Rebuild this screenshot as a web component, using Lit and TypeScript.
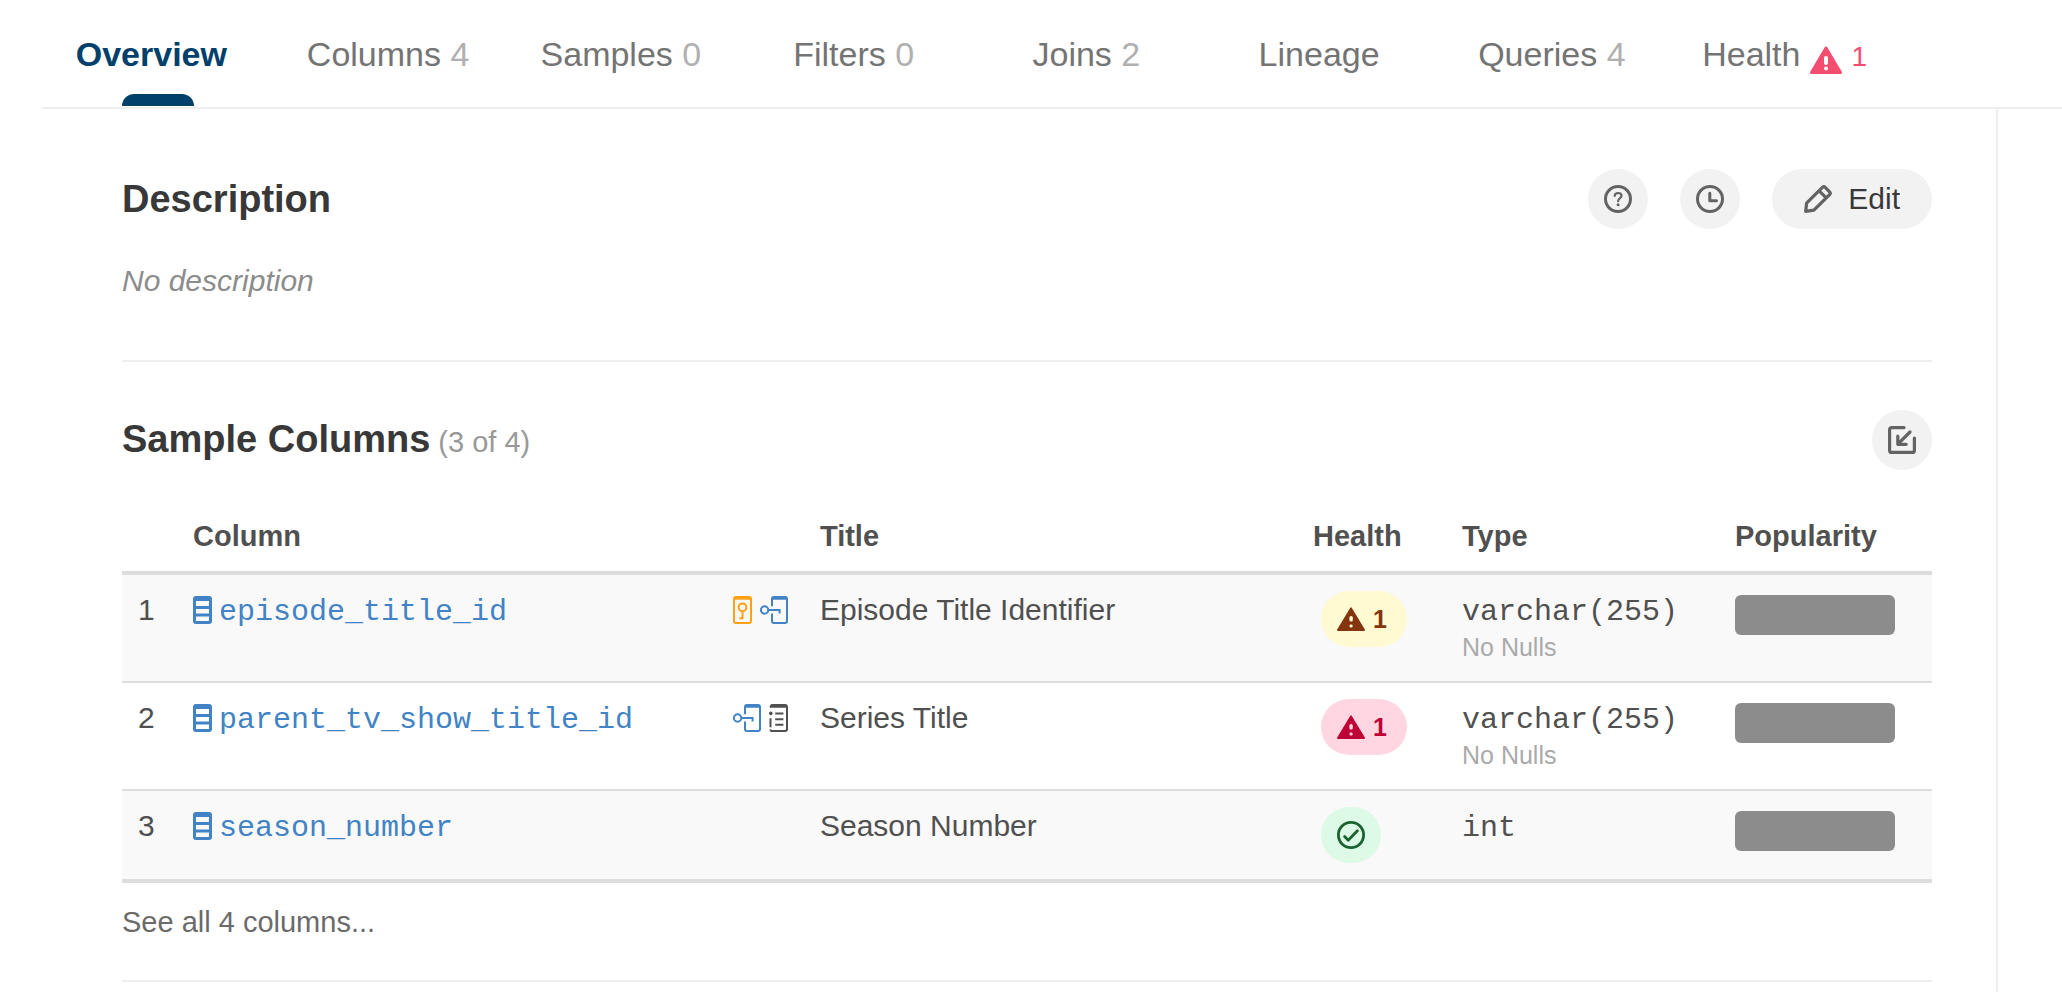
import { LitElement, html, css, svg, nothing } from "lit";
import { customElement, property, state } from "lit/decorators.js";
import { classMap } from "lit/directives/class-map.js";

interface Tab {
  label: string;
  count?: number;
  alert?: number;
}

interface Row {
  name: string;
  title: string;
  marks: string[];
  health: "warning" | "error" | "ok";
  issues?: number;
  type: string;
  note?: string;
}

const TABS: Tab[] = [
  { label: "Overview" },
  { label: "Columns", count: 4 },
  { label: "Samples", count: 0 },
  { label: "Filters", count: 0 },
  { label: "Joins", count: 2 },
  { label: "Lineage" },
  { label: "Queries", count: 4 },
  { label: "Health", alert: 1 },
];

const ROWS: Row[] = [
  {
    name: "episode_title_id",
    title: "Episode Title Identifier",
    marks: ["key", "join"],
    health: "warning",
    issues: 1,
    type: "varchar(255)",
    note: "No Nulls",
  },
  {
    name: "parent_tv_show_title_id",
    title: "Series Title",
    marks: ["join", "list"],
    health: "error",
    issues: 1,
    type: "varchar(255)",
    note: "No Nulls",
  },
  { name: "season_number", title: "Season Number", marks: [], health: "ok", type: "int" },
];

const ICONS: Record<string, { w: number; h: number; body: unknown }> = {
  help: {
    w: 28,
    h: 28,
    body: svg`<circle cx="14" cy="14" r="12.5" stroke-width="3"/>
      <path stroke-width="2.2" d="M10.7 10.8c.2-1.8 1.5-2.8 3.4-2.8 2 0 3.4 1.1 3.4 2.8 0 2.4-3.4 2.6-3.4 5.4"/>
      <circle cx="14.1" cy="19.8" r="1.5" fill="currentColor" stroke="none"/>`,
  },
  clock: {
    w: 28,
    h: 28,
    body: svg`<circle cx="14" cy="14" r="12.5" stroke-width="3"/>
      <path stroke-width="3" d="M13.8 8.3V15.8H20.5"/>`,
  },
  pencil: {
    w: 28,
    h: 28,
    body: svg`<path stroke-width="3.2" d="M1.7 26.3 2.6 18.2 18.4 2.4a2 2 0 0 1 2.8 0L25.6 6.8a2 2 0 0 1 0 2.8L9.9 25.2ZM15.2 5.8 22.2 12.8"/>`,
  },
  collapse: {
    w: 28,
    h: 28,
    body: svg`<path stroke-width="3.2" d="M16 1.6H3.6a2 2 0 0 0-2 2V24.4a2 2 0 0 0 2 2H24.4a2 2 0 0 0 2-2V12M22 6 9.8 18.2M9.8 10V18.3H18.2"/>`,
  },
  check: {
    w: 28,
    h: 28,
    body: svg`<circle cx="14" cy="14" r="12.6" stroke-width="2.8"/>
      <path stroke-width="2.8" d="M7.6 15.6 11.2 19.2 20.4 9.8"/>`,
  },
  triangle: {
    w: 28,
    h: 24,
    body: svg`<path fill="currentColor" stroke-width="2" d="M14 1.4 27 23H1Z"/>
      <rect class="cut" x="12.4" y="9" width="3.4" height="5.6" rx="1.6"/>
      <rect class="cut" x="12.6" y="17.4" width="3" height="3" rx="1.2"/>`,
  },
  alert: {
    w: 32,
    h: 28,
    body: svg`<path fill="currentColor" stroke-width="3" d="M16 2 30.5 26.5H1.5Z"/>
      <rect class="cut" x="14" y="10" width="4" height="9" rx="2"/>
      <rect class="cut" x="14" y="20.5" width="4" height="4" rx="2"/>`,
  },
  column: {
    w: 19,
    h: 28,
    body: svg`<path fill="currentColor" stroke="none" fill-rule="evenodd"
      d="M3 0H16a3 3 0 0 1 3 3V25a3 3 0 0 1-3 3H3a3 3 0 0 1-3-3V3a3 3 0 0 1 3-3ZM3 5V10H16V5ZM3 13V17.5H16V13ZM3 20.5V25H16V20.5Z"/>`,
  },
  key: {
    w: 19,
    h: 28,
    body: svg`<rect x="1" y="1" width="17" height="26" rx="2" stroke-width="2"/>
      <path stroke-width="2" stroke-linecap="butt" d="M1 2.7H18"/>
      <circle cx="9.5" cy="11.3" r="3.9" stroke-width="2"/>
      <path stroke-width="2" stroke-linecap="butt" stroke-linejoin="miter" d="M9.5 15.2V22.2H6.4"/>`,
  },
  join: {
    w: 28,
    h: 28,
    body: svg`<path stroke-width="2" stroke-linecap="butt" d="M12 10.2V3a2 2 0 0 1 2-2H25a2 2 0 0 1 2 2V25a2 2 0 0 1-2 2H14a2 2 0 0 1-2-2V17.5M12 2.7H27"/>
      <circle cx="4.6" cy="14" r="3.7" stroke-width="2"/>
      <path stroke-width="2" stroke-linecap="butt" stroke-linejoin="miter" d="M8.3 14H19.6V17.6"/>`,
  },
  list: {
    w: 19,
    h: 28,
    body: svg`<path stroke-width="2" d="M1.6 2.4 2.6 1H16a2 2 0 0 1 2 2V25a2 2 0 0 1-2 2H2.4L1.6 26.2"/>
      <path stroke-width="2" stroke-linecap="butt" d="M1 2.7H18M1.5 14.2V23.2"/>
      <circle cx="1.8" cy="9.4" r="1.8" fill="currentColor" stroke="none"/>
      <path stroke-width="2" stroke-linecap="butt" d="M6.2 9.6H14.4M6.2 15.2H14.4M6.2 20.8H14.4"/>`,
  },
};

@customElement("ui-icon")
export class UiIcon extends LitElement {
  @property() name = "";

  static styles = css`
    :host {
      display: inline-flex;
      flex: none;
    }
    .glyph {
      display: block;
      overflow: visible;
      fill: none;
      stroke: currentColor;
      stroke-linecap: round;
      stroke-linejoin: round;
    }
    .cut {
      fill: var(--icon-cut, #fff);
      stroke: none;
    }
  `;

  render() {
    const icon = ICONS[this.name];
    if (!icon) return nothing;
    return html`<svg class="glyph" width=${icon.w} height=${icon.h} viewBox="0 0 ${icon.w} ${icon.h}" aria-hidden="true">
      ${icon.body}
    </svg>`;
  }
}

@customElement("health-badge")
export class HealthBadge extends LitElement {
  @property() level = "ok";
  @property({ type: Number }) issues?: number;

  static styles = css`
    :host {
      display: block;
    }
    .badge {
      display: inline-flex;
      align-items: center;
      gap: 8px;
      height: 56px;
      margin-left: 8px;
      padding: 0 16px;
      border-radius: 28px;
      font-size: 25px;
      font-weight: 700;
      vertical-align: top;
    }
    .warning,
    .error {
      padding-right: 20px;
    }
    .warning {
      background: #fffad1;
      color: #843510;
      --icon-cut: #fffad1;
    }
    .error {
      background: #ffd6e1;
      color: #bf0036;
      --icon-cut: #ffd6e1;
    }
    .ok {
      background: #dcfae6;
      color: #1b632e;
    }
  `;

  render() {
    return html`<span class="badge ${this.level}">
      <ui-icon name=${this.level === "ok" ? "check" : "triangle"}></ui-icon>${this.issues
        ? html`<span>${this.issues}</span>`
        : nothing}
    </span>`;
  }
}

@customElement("app-root")
export class AppRoot extends LitElement {
  @state() private active = "Overview";

  static styles = css`
    :host {
      display: flex;
      flex-direction: column;
      min-height: 100vh;
      background: #fff;
      color: #505050;
      font-family: "Liberation Sans", Arial, sans-serif;
      font-size: 30px;
      line-height: 38px;
    }
    button {
      border: 0;
      margin: 0;
      padding: 0;
      background: none;
      color: inherit;
      font: inherit;
      cursor: pointer;
    }
    a {
      color: inherit;
      text-decoration: none;
    }
    .tabs {
      display: grid;
      grid-template-columns: repeat(8, minmax(0, 1fr));
      margin-left: 42px;
      padding-right: 158px;
      border-bottom: 2px solid #eee;
    }
    .tab {
      display: flex;
      flex-direction: column;
      align-items: center;
      gap: 20px;
      padding: 34px 0 1px;
      color: #747474;
      font-size: 34px;
      line-height: 40px;
      white-space: nowrap;
    }
    .label {
      display: flex;
      align-items: baseline;
      gap: 10px;
      padding-right: 6px;
    }
    .marker {
      width: 72px;
      height: 12px;
      border-radius: 12px 12px 0 0;
    }
    .active {
      color: #00406b;
      font-weight: 700;
    }
    .active .label {
      padding-right: 14px;
    }
    .active .marker {
      background: #00406b;
    }
    .count {
      color: #b0b0b0;
    }
    .alert {
      display: flex;
      align-items: baseline;
      gap: 9px;
      color: #f34d70;
      font-size: 28px;
      line-height: 34px;
    }
    .alert ui-icon {
      align-self: flex-end;
    }
    .content {
      flex: 1;
      margin: 0 64px 0 42px;
      padding: 12px 64px 0 80px;
      border-right: 2px solid #eee;
    }
    .section {
      padding-top: 48px;
      border-bottom: 2px solid #eee;
    }
    .head {
      display: flex;
      align-items: center;
      justify-content: space-between;
    }
    .heading {
      margin: 0;
      color: #383838;
      font-size: 38px;
      line-height: 44px;
    }
    .of {
      color: #999;
      font-size: 29px;
      font-weight: 400;
    }
    .actions {
      display: flex;
      gap: 32px;
    }
    .round {
      display: flex;
      align-items: center;
      justify-content: center;
      gap: 16px;
      min-width: 60px;
      height: 60px;
      border-radius: 30px;
      background: #f2f2f2;
      color: #636363;
    }
    .wide {
      padding: 0 32px;
    }
    .wide span {
      color: #383838;
    }
    .empty {
      margin: 33px 0 0;
      padding-bottom: 60px;
      color: #8c8c8c;
      font-style: italic;
    }
    .table {
      width: 100%;
      margin-top: 32px;
      border-collapse: separate;
      border-spacing: 0;
      table-layout: fixed;
    }
    .table th {
      box-sizing: border-box;
      padding: 16px;
      border-bottom: 4px solid #ddd;
      font-size: 29px;
      line-height: 37px;
      text-align: left;
    }
    .table td {
      padding: 16px;
      border-bottom: 2px solid #ddd;
      vertical-align: top;
    }
    .table tr:nth-child(odd) td {
      background: #f9f9f9;
    }
    .table tr:last-child td {
      border-bottom-width: 4px;
    }
    .table .w-index {
      width: 55px;
    }
    .table .w-name {
      width: 34.64%;
    }
    .table .w-health {
      width: 149px;
    }
    .table .w-type {
      width: 273px;
    }
    .table .w-pop {
      width: 213px;
    }
    .table .tight {
      padding-right: 0;
    }
    .name {
      display: flex;
      align-items: center;
      justify-content: space-between;
    }
    .link {
      display: flex;
      align-items: center;
      gap: 7px;
      color: #4183c4;
    }
    .mono {
      font-family: "Liberation Mono", "Courier New", monospace;
      line-height: 30px;
    }
    .marks {
      display: flex;
      gap: 8px;
    }
    .key {
      color: #ffa114;
    }
    .join {
      color: #4183c4;
    }
    .note {
      color: #aaa;
      font-size: 25px;
      line-height: 36px;
    }
    .bar {
      width: 160px;
      height: 40px;
      margin-top: 4px;
      border-radius: 6px;
      background: #8c8c8c;
    }
    .more {
      margin: 20px 0 0;
      padding-bottom: 39px;
      color: #6b6b6b;
      font-size: 29px;
    }
  `;

  private renderTab(tab: Tab) {
    const active = tab.label === this.active;
    return html`<button
      class=${classMap({ tab: true, active })}
      role="tab"
      aria-selected=${active ? "true" : "false"}
      @click=${() => (this.active = tab.label)}
    >
      <span class="label">
        <span>${tab.label}${tab.count !== undefined ? html` <span class="count">${tab.count}</span>` : nothing}</span>
        ${tab.alert ? html`<span class="alert"><ui-icon name="alert"></ui-icon><span>${tab.alert}</span></span>` : nothing}
      </span>
      <span class="marker"></span>
    </button>`;
  }

  private renderRow(row: Row, index: number) {
    return html`<tr>
      <td class="tight">${index + 1}</td>
      <td>
        <div class="name">
          <a class="link" href="#${row.name}"
            ><ui-icon name="column"></ui-icon><span><span class="mono">${row.name}</span></span></a
          >
          <span class="marks">${row.marks.map((m) => html`<ui-icon class=${m} name=${m}></ui-icon>`)}</span>
        </div>
      </td>
      <td>${row.title}</td>
      <td class="tight"><health-badge level=${row.health} .issues=${row.issues}></health-badge></td>
      <td>
        <div><span class="mono">${row.type}</span></div>
        ${row.note ? html`<div class="note">${row.note}</div>` : nothing}
      </td>
      <td><div class="bar"></div></td>
    </tr>`;
  }

  render() {
    return html`
      <nav class="tabs" role="tablist">${TABS.map((t) => this.renderTab(t))}</nav>
      <main class="content">
        <section class="section">
          <div class="head">
            <h2 class="heading">Description</h2>
            <div class="actions">
              <button class="round" aria-label="Help"><ui-icon name="help"></ui-icon></button>
              <button class="round" aria-label="History"><ui-icon name="clock"></ui-icon></button>
              <button class="round wide"><ui-icon name="pencil"></ui-icon><span>Edit</span></button>
            </div>
          </div>
          <p class="empty">No description</p>
        </section>
        <section class="section">
          <div class="head">
            <h2 class="heading">Sample Columns<span class="of"> (3 of 4)</span></h2>
            <button class="round" aria-label="Collapse"><ui-icon name="collapse"></ui-icon></button>
          </div>
          <table class="table">
            <thead>
              <tr>
                <th class="w-index tight"></th>
                <th class="w-name">Column</th>
                <th>Title</th>
                <th class="w-health tight">Health</th>
                <th class="w-type">Type</th>
                <th class="w-pop">Popularity</th>
              </tr>
            </thead>
            <tbody>
              ${ROWS.map((r, i) => this.renderRow(r, i))}
            </tbody>
          </table>
          <p class="more"><a href="#columns">See all 4 columns...</a></p>
        </section>
      </main>
    `;
  }
}
